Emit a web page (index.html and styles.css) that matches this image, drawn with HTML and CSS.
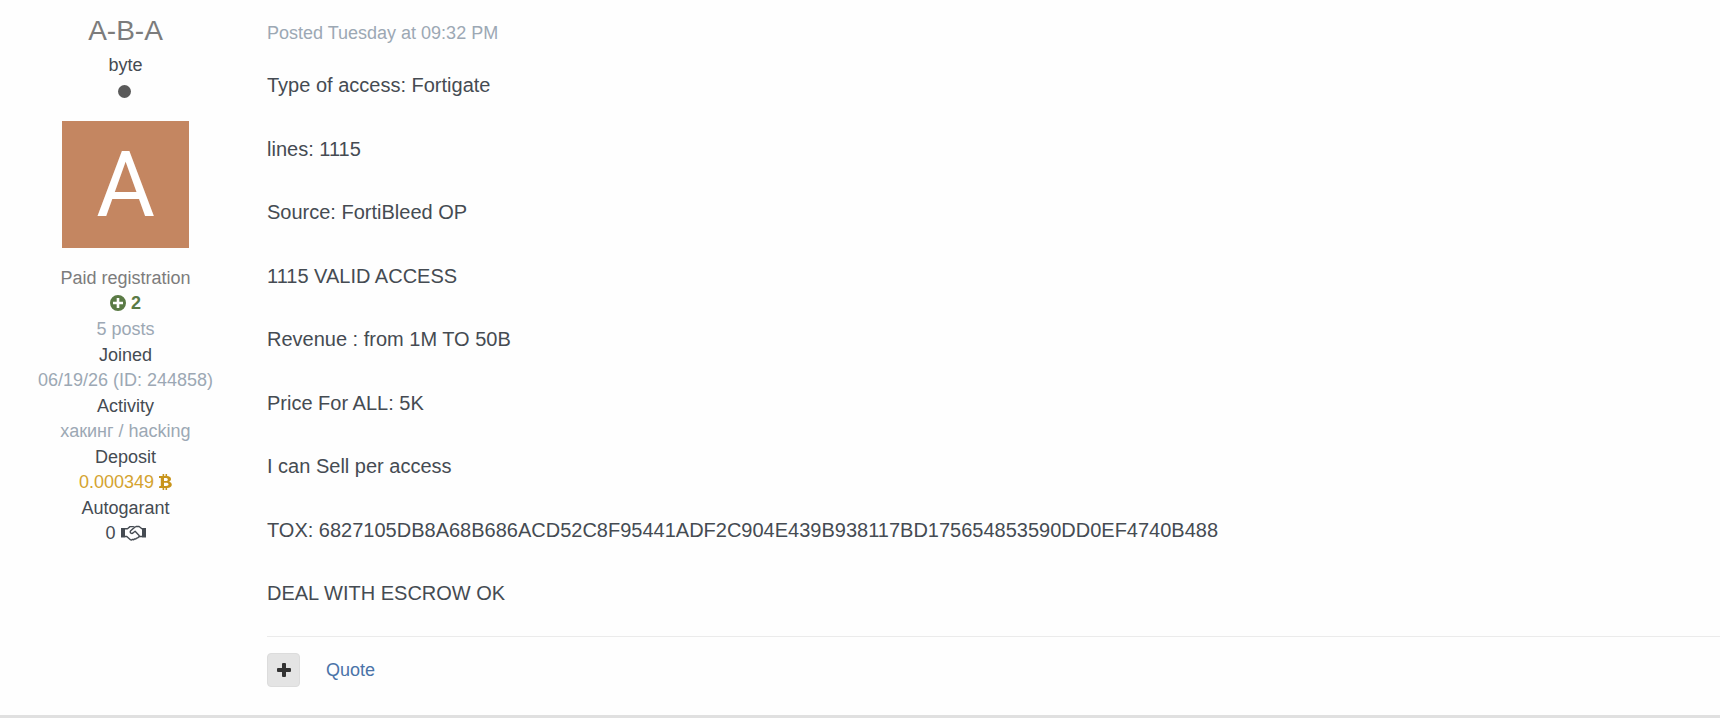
FILE: index.html
```
<!DOCTYPE html>
<html lang="en">
<head>
    <meta charset="UTF-8">
    <meta name="viewport" content="width=device-width, initial-scale=1.0">
    <title>Topic</title>
    <link rel="stylesheet" href="styles.css">
</head>
<body>
    <article class="post">
        <aside class="author">
            <h3 class="author-name">A-B-A</h3>
            <p class="rank">byte</p>
            <span class="pip"></span>
            <div class="avatar">A</div>
            <div class="group">
                <p class="member-group">Paid registration</p>
                <p class="reputation">
                    <svg class="icon-rep" viewBox="0 0 16 16">
                        <path fill-rule="evenodd" d="M8 0a8 8 0 1 1 0 16A8 8 0 0 1 8 0zM6.7 3v3.7H3v2.6h3.7V13h2.6V9.3H13V6.7H9.3V3z"/>
                    </svg>
                    2
                </p>
            </div>
            <p class="light group">5 posts</p>
            <dl>
                <div class="group">
                    <dt>Joined</dt>
                    <dd>06/19/26 (ID: 244858)</dd>
                </div>
                <div class="group">
                    <dt>Activity</dt>
                    <dd>хакинг / hacking</dd>
                </div>
                <div class="group">
                    <dt>Deposit</dt>
                    <dd class="deposit">
                        0.000349
                        <svg class="icon-btc" viewBox="0 0 13 16">
                            <path fill-rule="evenodd" d="M0 2h3.6V0h1.6v2h1.3V0h1.6v2.1c2.4.2 3.9 1.2 3.9 3 0 1.3-.7 2.1-1.9 2.6 1.700.4 2.7 1.5 2.7 3 0 2-1.7 3.2-4.7 3.300v2H6.500v-2H5.200v2H3.600v-2H0l.4-1.900h1.400V3.900H0zM5 4v3h1.500c1.500 0 2.300-.5 2.300-1.500S8 4 6.500 4zM5 8.700V12h2c1.700 0 2.500-.6 2.500-1.700S8.700 8.700 7 8.700z"/>
                        </svg>
                    </dd>
                </div>
                <div class="group">
                    <dt>Autogarant</dt>
                    <dd class="autogarant">
                        0
                        <svg class="icon-deal" viewBox="0 0 25 16">
                            <path class="cuff" d="M0 3h4v9.500H0zM21 3h4v9.500h-4z"/>
                            <path class="hands" d="M4 3.700h2.500L9 1.600h3l1.500.8 1.600-.9h3l2.800 2.200H21M4 11.500h1.800l3.600 3.200c.7.500 1.500.3 1.900-.3.800.5 1.600.3 2.100-.5.900.3 1.700 0 2.100-.8.900.1 1.500-.2 2-.9l.6-.7H21M13.500 2.400L9.700 5.700c-.8.900-.5 2 .3 2.500.8.400 1.600.2 2.200-.4l1.900-1.500 4 4.200c.3.500.2 1.200-.4 1.700"/>
                        </svg>
                    </dd>
                </div>
            </dl>
        </aside>

        <div class="post-main">
            <a href="#" class="posted">Posted Tuesday at 09:32 PM</a>
            <div class="post-content">
                <p>Type of access: Fortigate<br><br>lines: 1115</p>
                <p>Source: FortiBleed OP<br><br>1115 VALID ACCESS</p>
                <p>Revenue : from 1M TO 50B<br><br>Price For ALL: 5K</p>
                <p>I can Sell per access<br><br>TOX: 6827105DB8A68B686ACD52C8F95441ADF2C904E439B938117BD175654853590DD0EF4740B488</p>
                <p>DEAL WITH ESCROW OK</p>
            </div>
            <div class="post-controls">
                <button type="button" class="multiquote" aria-label="MultiQuote">
                    <svg class="icon-plus" viewBox="0 0 14 14">
                        <path d="M5 1q0-1 1-1h2q1 0 1 1v4h4q1 0 1 1v2q0 1-1 1H9v4q0 1-1 1H6q-1 0-1-1V9H1Q0 9 0 8V6q0-1 1-1h4z"/>
                    </svg>
                </button>
                <a href="#" class="quote">Quote</a>
            </div>
        </div>
    </article>
</body>
</html>
```

FILE: styles.css
```
:root {
    --text: #454b52;
    --light: #9ca8b4;
    --link: #4a73a8;
    --line: #ebebeb;
}

* {
    margin: 0;
    padding: 0;
    box-sizing: border-box;
}

body {
    font-family: "Liberation Sans", Arial, sans-serif;
    font-size: 18px;
    line-height: 25px;
    color: var(--text);
    background: #fefefe;
}

a {
    text-decoration: none;
}

svg {
    fill: currentColor;
}

.post {
    display: flex;
    padding-bottom: 28px;
    border-bottom: 3px solid #e0e0e0;
}

.author {
    width: 251px;
    flex-shrink: 0;
    padding-top: 14px;
    text-align: center;
}

.author-name {
    font-size: 28px;
    font-weight: 400;
    line-height: 34px;
    margin-bottom: 5px;
    color: #7c7c7c;
}

.pip {
    display: block;
    width: 13px;
    height: 13px;
    margin: 7px auto 23px 118px;
    border-radius: 50%;
    background: #5a5a5a;
}

.avatar {
    width: 127px;
    height: 127px;
    margin: 0 auto 18px;
    background: #c48661;
    color: #fff;
    font-family: Roboto, sans-serif;
    font-size: 90px;
    line-height: 130px;
}

.group {
    margin-bottom: 1px;
}

.member-group {
    color: #7c7c7c;
}

.reputation {
    font-weight: 700;
    color: #5a7a45;
}

.light,
dd {
    color: var(--light);
}

dd.deposit {
    color: #d4a32f;
}

dd.autogarant {
    color: var(--text);
}

.icon-rep {
    width: 16px;
    height: 16px;
    vertical-align: -2px;
}

.icon-btc {
    width: 13px;
    height: 16px;
    vertical-align: -2px;
    fill: #c8941a;
}

.icon-deal {
    width: 25px;
    height: 16px;
    vertical-align: -2px;
}

.hands {
    fill: none;
    stroke: currentColor;
    stroke-width: 1.4;
    stroke-linejoin: round;
}

.post-main {
    flex: 1;
    min-width: 0;
    padding: 21px 0 0 16px;
}

.posted {
    display: block;
    color: var(--light);
}

.post-content {
    margin-top: 23px;
    font-size: 20px;
    line-height: 32px;
}

.post-content p {
    margin-bottom: 31px;
    overflow-wrap: break-word;
}

.post-content p:last-child {
    margin-bottom: 27px;
}

.post-controls {
    display: flex;
    align-items: center;
    gap: 26px;
    padding-top: 16px;
    border-top: 1px solid var(--line);
}

.multiquote {
    display: flex;
    align-items: center;
    justify-content: center;
    width: 33px;
    height: 34px;
    border: 1px solid #dcdcdc;
    border-radius: 4px;
    background: #e4e4e4;
    color: #333;
    cursor: pointer;
}

.icon-plus {
    width: 14px;
    height: 14px;
}

.quote {
    color: var(--link);
}
```
